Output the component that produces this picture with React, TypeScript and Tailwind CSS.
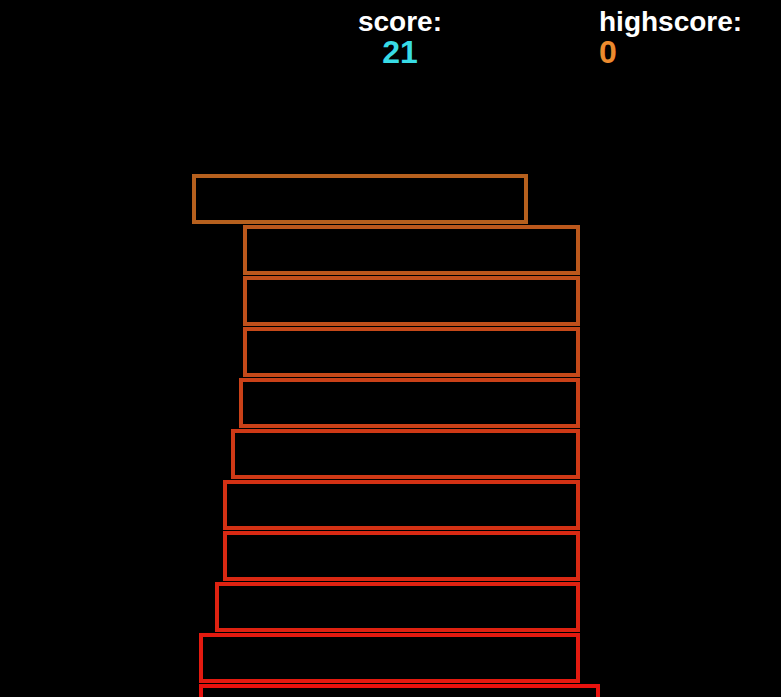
type Block = { left: number; width: number }

// tower slices from the top (most recent) down to the base
const blocks: Block[] = [
  { left: 192, width: 336 },
  { left: 243, width: 337 },
  { left: 243, width: 337 },
  { left: 243, width: 337 },
  { left: 239, width: 341 },
  { left: 231, width: 349 },
  { left: 223, width: 357 },
  { left: 223, width: 357 },
  { left: 215, width: 365 },
  { left: 199, width: 381 },
  { left: 199, width: 401 },
]

const top = [182, 96, 30]
const bottom = [232, 18, 14]

function blockColor(i: number) {
  const t = i / (blocks.length - 1)
  const c = top.map((v, k) => Math.round(v + (bottom[k] - v) * t))
  return `rgb(${c[0]}, ${c[1]}, ${c[2]})`
}

export default function App() {
  return (
    <div className="w-[781px] h-[697px] bg-black overflow-hidden font-['Liberation_Sans',Arial,sans-serif] font-bold">
      <div className="flex pt-[8px]">
        <div className="ml-[300px] w-[200px] text-center">
          <div className="text-[28px] leading-[28px] text-white">score:</div>
          <div className="text-[32px] leading-[32px] text-[#38dce6]">21</div>
        </div>
        <div className="ml-[99px]">
          <div className="text-[28px] leading-[28px] text-white">highscore:</div>
          <div className="text-[32px] leading-[32px] text-[#ec8a2e]">0</div>
        </div>
      </div>
      <div className="mt-[106px] flex flex-col gap-[1px]">
        {blocks.map((b, i) => (
          <div
            key={i}
            className="h-[50px] shrink-0 border-4"
            style={{ marginLeft: b.left, width: b.width, borderColor: blockColor(i) }}
          />
        ))}
      </div>
    </div>
  )
}
